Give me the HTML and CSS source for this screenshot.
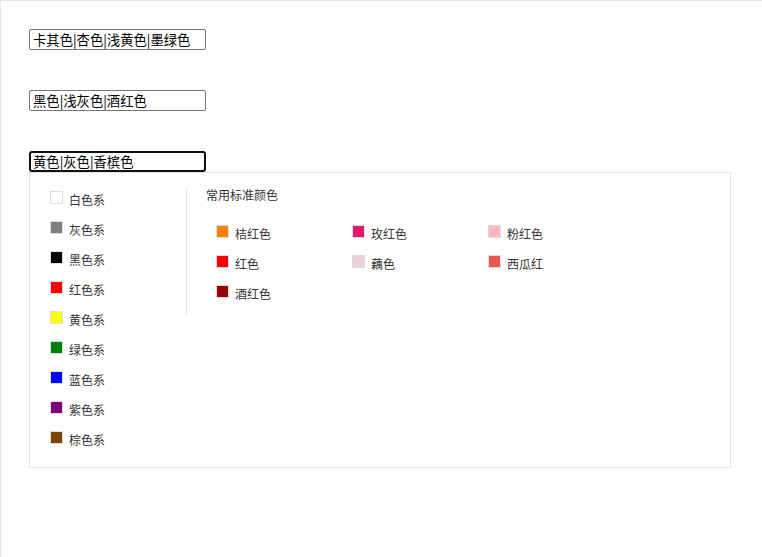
FILE: index.html
```html
<!DOCTYPE html>
<html lang="zh">
<head>
<meta charset="utf-8">
<link rel="stylesheet" href="styles.css">
</head>
<body>
<div class="page">
  <div class="field"><input class="box" type="text" value="卡其色|杏色|浅黄色|墨绿色"></div>
  <div class="field"><input class="box" type="text" value="黑色|浅灰色|酒红色"></div>
  <div class="field last">
    <input class="box focused" type="text" value="黄色|灰色|香槟色">
    <div class="panel">
      <ul class="series">
        <li class="item"><span class="sw" style="background:#ffffff"></span>白色系</li>
        <li class="item"><span class="sw" style="background:#808080"></span>灰色系</li>
        <li class="item"><span class="sw" style="background:#000000"></span>黑色系</li>
        <li class="item"><span class="sw" style="background:#ff0000"></span>红色系</li>
        <li class="item"><span class="sw" style="background:#ffff00"></span>黄色系</li>
        <li class="item"><span class="sw" style="background:#008000"></span>绿色系</li>
        <li class="item"><span class="sw" style="background:#0000ff"></span>蓝色系</li>
        <li class="item"><span class="sw" style="background:#800080"></span>紫色系</li>
        <li class="item"><span class="sw" style="background:#7b4400"></span>棕色系</li>
      </ul>
      <div class="std">
        <div class="title">常用标准颜色</div>
        <ul class="grid">
          <li class="item"><span class="sw" style="background:#ff7f00"></span>桔红色</li>
          <li class="item"><span class="sw" style="background:#e4186b"></span>玫红色</li>
          <li class="item"><span class="sw" style="background:#ffb6c1"></span>粉红色</li>
          <li class="item"><span class="sw" style="background:#ff0000"></span>红色</li>
          <li class="item"><span class="sw" style="background:#edd1d8"></span>藕色</li>
          <li class="item"><span class="sw" style="background:#f05654"></span>西瓜红</li>
          <li class="item"><span class="sw" style="background:#990000"></span>酒红色</li>
        </ul>
      </div>
    </div>
  </div>
</div>
</body>
</html>
```
FILE: styles.css
```css
html, body {
  margin: 0;
  padding: 0;
  background: #ffffff;
}
.page {
  box-sizing: border-box;
  width: 762px;
  height: 557px;
  border-top: 1px solid #e6e6e6;
  border-left: 1px solid #e6e6e6;
  padding: 28px 0 0 28px;
  font-family: "Noto Sans CJK SC", "Microsoft YaHei", sans-serif;
}
.field {
  margin-bottom: 40px;
}
.field.last {
  margin-bottom: 0;
}
.box {
  display: block;
  box-sizing: border-box;
  width: 177px;
  height: 21px;
  margin: 0;
  padding: 0 3px;
  border: 1px solid #767676;
  border-radius: 2px;
  font-family: "Noto Sans CJK SC", sans-serif;
  font-size: 13.33px;
  line-height: 19px;
  color: #000;
  background: #fff;
  outline: none;
}
.box.focused {
  border: 2px solid #101010;
  border-radius: 3px;
  padding: 0 2px;
}
.panel {
  box-sizing: border-box;
  width: 702px;
  height: 296px;
  border: 1px solid #e5e5e5;
  display: flex;
  align-items: flex-start;
  padding: 11px 0 0 20px;
}
ul {
  list-style: none;
  margin: 0;
  padding: 0;
}
.series {
  width: 136px;
}
.item {
  height: 30px;
  display: flex;
  align-items: center;
  font-size: 12px;
  color: #333;
}
.sw {
  box-sizing: border-box;
  width: 13px;
  height: 13px;
  border: 1px solid #dddddd;
  margin-right: 6px;
  margin-top: -3px;
  flex: none;
}
.std {
  margin-top: 4px;
  border-left: 1px solid #e5e5e5;
  padding: 0 0 7px 19px;
}
.title {
  font-size: 12px;
  line-height: 14px;
  color: #333;
}
.grid {
  margin-top: 16px;
  padding-left: 10px;
  display: grid;
  grid-template-columns: 136px 136px 136px;
}
```
